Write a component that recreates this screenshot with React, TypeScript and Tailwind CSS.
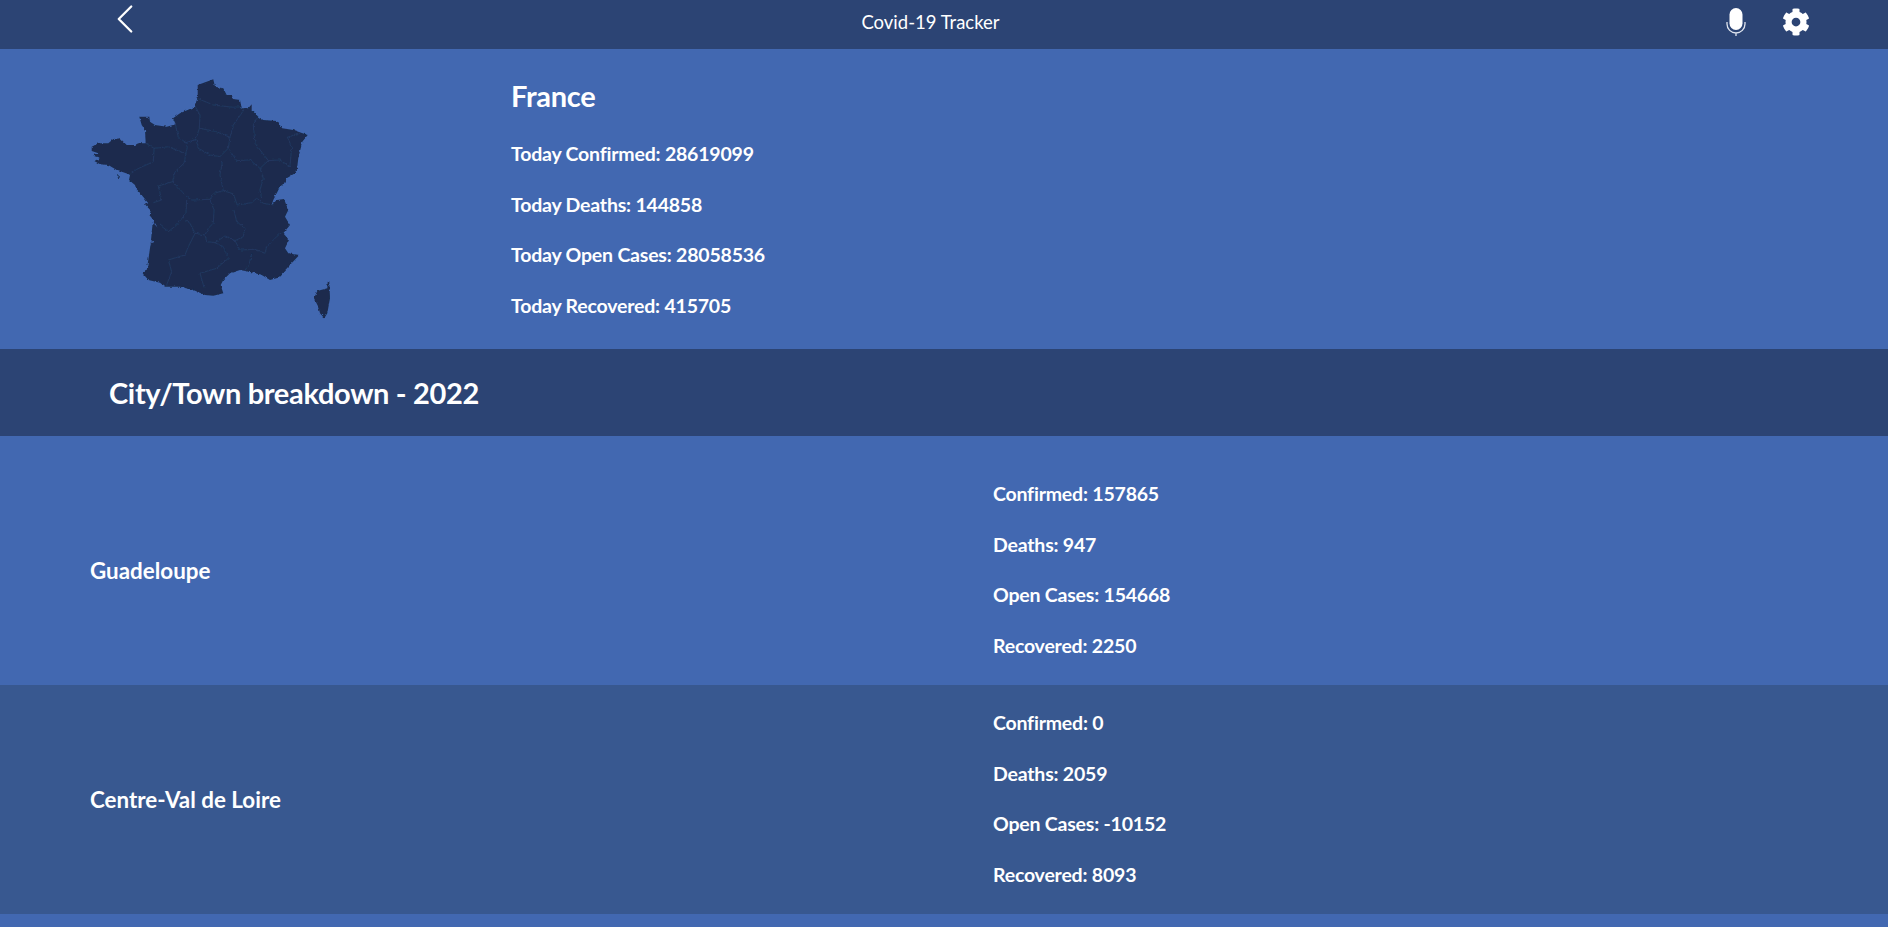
import React from "react";
import { ChevronLeft } from "lucide-react";
import { FaCog } from "react-icons/fa";

// traced in page coordinates, the svg viewBox starts at 60,50
const FRANCE_OUTLINE =
  "M197.7 85 L213.3 79.3 L215 86.7 L223.3 88.3 L226.7 95 L231.7 95 L233.3 99 L240 100 L241.7 108.3 L248.3 108.3 L251.7 104.3 L251.7 110 L258.3 116.7 L263.3 120 L276.7 121 L282.3 128.3 L293.3 130 L307.7 135 L302.3 141.7 L298.3 158.3 L296.7 171.7 L293.3 174.3 L286.7 178.3 L283.3 185 L280 186.7 L273.3 200 L271.7 205 L276.7 200 L284 199 L288.3 210 L285 216.7 L290 225 L283.3 233.3 L289 240 L285 248.3 L288.3 253.3 L299.3 255 L288.3 266.7 L278.3 277.7 L270 280 L261.7 275 L251.7 272.3 L240 270 L230 273.3 L223.3 280 L220.7 285 L223.3 293.3 L213.3 295.7 L205 295 L193.3 290 L180 286.7 L165 286.7 L160 282.7 L148.3 280 L142.7 273.3 L146.7 270 L148.3 260 L150.7 243.3 L154 242.3 L151 240 L152.7 222.3 L158.3 228.3 L160.7 233.3 L160 231.7 L152.7 219 L149.3 215 L151.7 211.7 L145 204.3 L148.3 203.3 L141.7 195 L136 188.3 L135 185 L129 180 L130 175 L128.3 174 L116.7 170 L108.3 165 L100 164.3 L94.3 161 L100 158 L93.3 155.7 L98.3 153.3 L91.7 151 L91.7 146.7 L98.3 143.3 L108.3 143.3 L113.3 139 L120 138.3 L126.7 145 L135 145 L138.3 143.3 L145.7 143.3 L145 130 L141.7 125 L139.3 116.7 L149.3 116.7 L150 121.7 L155 125 L166.7 126.7 L175.7 124.3 L173 118.3 L180 113.3 L195 106.7 L195 104.3 L197.7 98.3 Z";

const CORSICA_OUTLINE =
  "M327.7 281.7 L329.3 281.7 L330 298.3 L327.3 313.3 L324.3 318.3 L320 313.3 L318.3 306.7 L314 298.3 L317.3 291 L327.3 288.3 Z";

// these were read off the 3x crop, so they get scaled down below
const REGION_LINES = [
  "M412 145 L460 165 L520 172 L545 170",
  "M405 168 L420 195 L418 235 L470 245 L510 262 L520 225 L545 190 L552 178",
  "M345 218 L355 262 L378 278 L408 268 L418 235",
  "M408 268 L415 295 L450 315 L480 320 L505 295 L510 262",
  "M505 295 L530 332 L570 330 L600 355 L625 332 L585 280 L580 225 L590 205",
  "M625 332 L660 330 L690 350 L695 290 L682 262 L715 250",
  "M258 280 L282 295 L325 290 L360 305 L378 310 L382 292 L378 278",
  "M282 295 L280 335 L230 358 L212 372",
  "M378 310 L372 340 L345 365 L338 395 L380 440 L395 450 L450 448 L462 430 L490 422 L520 432 L532 465 L575 458 L590 445 L610 460 L640 465",
  "M488 330 L480 375 L490 422",
  "M600 355 L610 385 L600 420 L605 445",
  "M338 395 L295 408 L305 450 L280 458",
  "M380 450 L378 490 L350 525 L325 545 L300 525",
  "M370 505 L390 520 L405 550 L435 555 L445 535 L460 520 L462 480 L450 448",
  "M522 480 L530 515 L555 535 L550 560 L525 572 L495 558 L465 578 L440 575 L435 555",
  "M405 550 L385 590 L375 615 L325 630 L335 665 L320 705",
  "M465 578 L490 590 L505 625 L470 655 L420 670 L432 712",
  "M525 572 L540 600 L585 598 L615 610 L620 590 L650 560 L668 545",
  "M575 612 L568 640 L555 662",
];

const cities = [
  {
    name: "Guadeloupe",
    stats: ["Confirmed: 157865", "Deaths: 947", "Open Cases: 154668", "Recovered: 2250"],
    rowClass: "bg-[#4268b1] h-[249px] pt-[45px]",
    nameClass: "pb-[24px]",
  },
  {
    name: "Centre-Val de Loire",
    stats: ["Confirmed: 0", "Deaths: 2059", "Open Cases: -10152", "Recovered: 8093"],
    rowClass: "bg-[#385890] h-[229px] pt-[25px]",
    nameClass: "pb-[24px]",
  },
];

function FranceMap() {
  return (
    <svg viewBox="60 50 300 290" className="w-[300px] h-[290px] shrink-0">
      <filter id="rough" x="0" y="0" width="100%" height="100%">
        <feTurbulence type="fractalNoise" baseFrequency="0.3" numOctaves="2" seed="4" />
        <feDisplacementMap in="SourceGraphic" scale="3" xChannelSelector="R" yChannelSelector="G" />
      </filter>
      <g filter="url(#rough)">
        <path d={FRANCE_OUTLINE} fill="#1a2c4e" />
        <path d={CORSICA_OUTLINE} fill="#1a2c4e" />
        <path d="M117 175 L121 177 L118 178 Z" fill="#1a2c4e" />
        <g transform="translate(60 50) scale(0.3333)">
          {REGION_LINES.map((d) => (
            <path key={d} d={d} fill="none" stroke="#263d68" strokeWidth="2" />
          ))}
        </g>
      </g>
    </svg>
  );
}

function MicIcon() {
  return (
    <svg viewBox="0 0 20 28" className="absolute left-[1726px] top-[8px] w-[20px] h-[28px]">
      <rect x="3.5" y="0" width="13" height="22" rx="6.5" fill="#fff" />
      <path d="M1 14 v2 a9 9 0 0 0 18 0 v-2 M10 25 v3" fill="none" stroke="#dfe4ee" strokeWidth="1.3" />
    </svg>
  );
}

function App() {
  return (
    <div className="h-[927px] overflow-hidden bg-[#4268b1] text-white font-['Lato',sans-serif]">
      <header className="relative h-[49px] bg-[#2c4474] flex items-center justify-center">
        <ChevronLeft className="absolute left-[100px] top-[-6px] w-[50px] h-[50px]" strokeWidth={1.1} />
        <span className="text-[18.5px] ml-[-27px] pb-[4px]">Covid-19 Tracker</span>
        <MicIcon />
        <FaCog className="absolute left-[1782px] top-[8px] w-[28px] h-[28px]" />
      </header>

      <section className="h-[300px] flex pl-[60px] pt-[1px]">
        <FranceMap />
        <div className="ml-[151px] pt-[26px]">
          <h1 className="text-[29px] leading-[40px] font-bold tracking-[-0.3px] mb-[25px]">France</h1>
          <div className="flex flex-col gap-[25px] text-[19.5px] leading-[25.6px] font-bold tracking-[-0.2px]">
            <p>Today Confirmed: 28619099</p>
            <p>Today Deaths: 144858</p>
            <p>Today Open Cases: 28058536</p>
            <p>Today Recovered: 415705</p>
          </div>
        </div>
      </section>

      <div className="h-[87px] bg-[#2c4474] flex items-center pl-[109px] text-[29px] font-bold tracking-[-0.33px]">
        City/Town breakdown - 2022
      </div>

      {cities.map((city) => (
        <div key={city.name} className={`flex ${city.rowClass}`}>
          <div className={`w-[993px] shrink-0 pl-[90px] flex items-center text-[22.4px] font-bold ${city.nameClass}`}>
            {city.name}
          </div>
          <div className="flex flex-col gap-[25px] text-[19.5px] leading-[25.6px] font-bold tracking-[-0.2px]">
            {city.stats.map((s) => (
              <p key={s}>{s}</p>
            ))}
          </div>
        </div>
      ))}
    </div>
  );
}

export default App;
